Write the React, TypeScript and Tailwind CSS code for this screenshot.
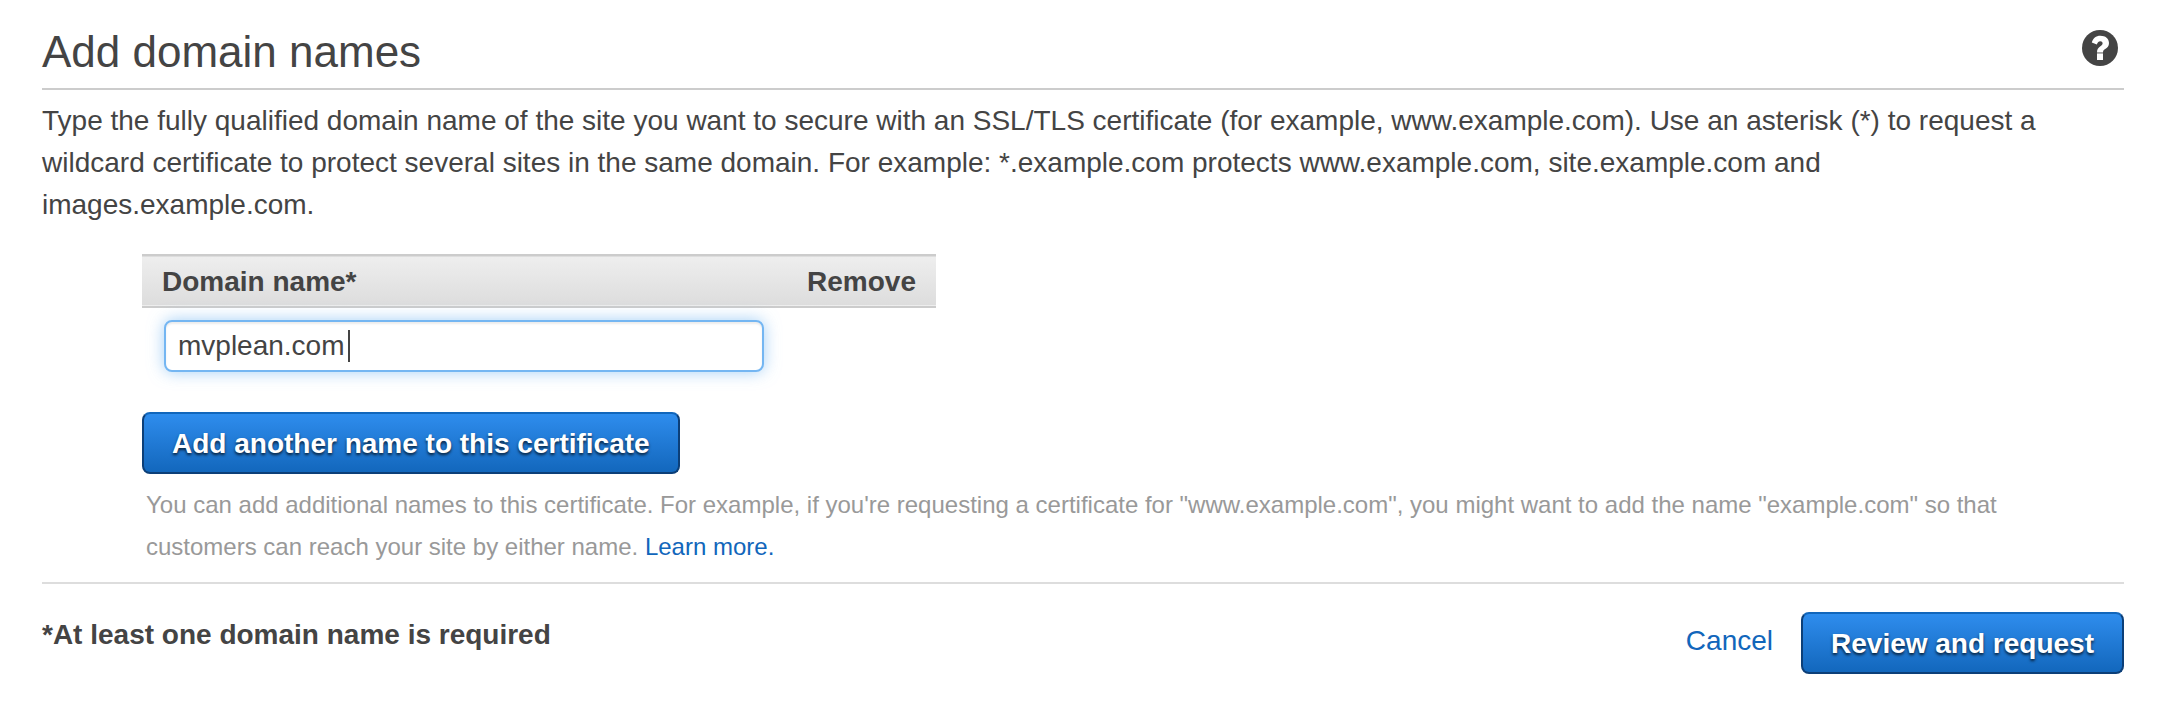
import { useState } from "react";
import type { ReactNode } from "react";

function HelpIcon() {
  return (
    <svg viewBox="0 0 36 36" className="size-9" aria-hidden="true">
      <circle cx="18" cy="18" r="18" fill="#444" />
      <path
        d="M9.8 12.6 C11 8.2 13.8 5.8 18.4 5.8 C23.4 5.8 27 8.6 27 13 C27 15.8 25.6 17.4 23.6 18.8 C21.8 20 21 20.6 21 22.4 L15 22.4 C15 19.2 16.2 17.8 18.4 16.2 C20 15 20.6 14.5 20.6 13.2 C20.6 11.9 19.6 11.2 18.3 11.2 C16.6 11.2 15.8 12.2 14.8 14.6 Z"
        fill="#fff"
      />
      <rect x="15" y="23.4" width="6" height="6.6" fill="#fff" />
    </svg>
  );
}

function PrimaryButton({ children }: { children: ReactNode }) {
  return (
    <button
      type="button"
      className="h-[62px] cursor-pointer rounded-lg border-2 border-[#0c3f78] border-t-[#1166bb] bg-linear-to-b from-[#2f8eef] to-[#1166bb] bg-origin-border px-7 pt-0.5 text-[28px] leading-[42px] font-bold text-white [text-shadow:0_2px_3px_rgba(0,0,0,0.75)]"
    >
      {children}
    </button>
  );
}

export default function App() {
  const [domain, setDomain] = useState("mvplean.com");

  return (
    <main className="bg-white pt-7 pr-10 pb-14 pl-[42px] font-['Liberation_Sans',Arial,sans-serif] text-[28px] leading-[42px] text-[#444]">
      <header className="flex items-start justify-between border-b-2 border-[#ccc] pr-1.5 pb-3">
        <h1 className="text-[44px] leading-[48px]">Add domain names</h1>
        <button type="button" aria-label="Help" className="mt-0.5 cursor-pointer">
          <HelpIcon />
        </button>
      </header>

      <p className="mt-2.5 pr-10">
        Type the fully qualified domain name of the site you want to secure with an SSL/TLS
        certificate (for example, www.example.com). Use an asterisk (*) to request a wildcard
        certificate to protect several sites in the same domain. For example: *.example.com
        protects www.example.com, site.example.com and images.example.com.
      </p>

      <section className="mt-7 pl-[100px]">
        <table className="w-[794px] border-collapse">
          <thead>
            <tr className="h-[52px] border-y-2 border-[#ccc] bg-linear-to-b from-[#eee] to-[#ddd]">
              <th scope="col" className="p-0 pt-0.5 pl-5 text-left font-bold">
                <label htmlFor="domain">Domain name*</label>
              </th>
              <th scope="col" className="p-0 pt-0.5 pr-5 text-right font-bold">
                Remove
              </th>
            </tr>
          </thead>
          <tbody>
            <tr>
              <td className="p-0 pt-3 pl-[22px]">
                <div className="relative w-[600px]">
                  <input
                    id="domain"
                    type="text"
                    value={domain}
                    onChange={(e) => setDomain(e.target.value)}
                    className="block h-[52px] w-full rounded-lg border-2 border-[#74b6f2] bg-white px-3 caret-transparent shadow-[0_0_16px_rgba(102,175,240,0.6),inset_0_2px_2px_rgba(0,0,0,0.08)] outline-none"
                  />
                  <span className="absolute top-2.5 left-[184px] h-8 w-0.5 bg-[#444]" />
                </div>
              </td>
              <td />
            </tr>
          </tbody>
        </table>

        <div className="mt-10 flex">
          <PrimaryButton>Add another name to this certificate</PrimaryButton>
        </div>

        <p className="mt-2.5 pr-12 pl-1 text-[24px] text-[#999]">
          <span>
            You can add additional names to this certificate. For example, if you're requesting a
            certificate for "www.example.com", you might want to add the name "example.com" so
            that customers can reach your site by either name.
          </span>{" "}
          <a href="#learn-more" className="inline-block text-[#1166bb]">
            Learn more.
          </a>
        </p>
      </section>

      <footer className="mt-3.5 flex items-start justify-between border-t-2 border-[#ddd] pt-7">
        <p className="pt-0.5 font-bold">*At least one domain name is required</p>
        <div className="flex items-start gap-7">
          <a href="#cancel" className="pt-2 text-[#1166bb]">
            Cancel
          </a>
          <PrimaryButton>Review and request</PrimaryButton>
        </div>
      </footer>
    </main>
  );
}
